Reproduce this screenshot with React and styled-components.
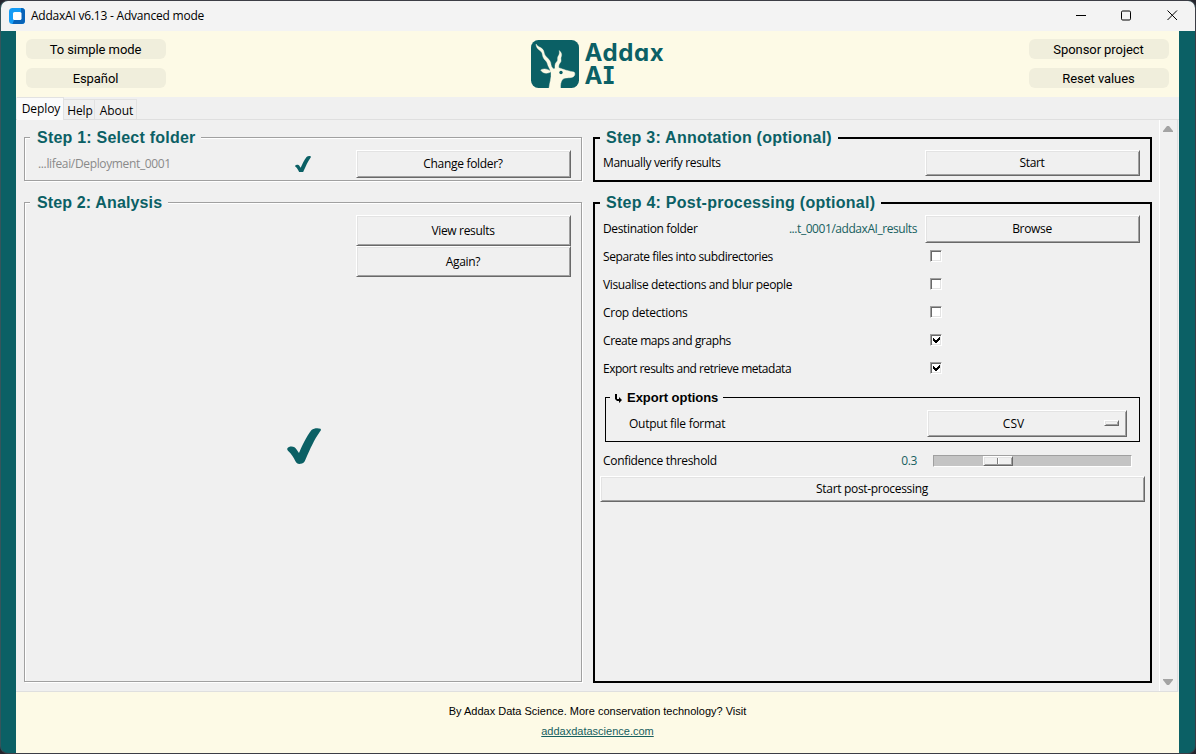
import React from "react";
import styled, { createGlobalStyle, css } from "styled-components";

const teal = "#0b6065";
const face = "#f0f0f0";
const cream = "#fdfae6";

const GlobalStyle = createGlobalStyle`
  *, *::before, *::after { box-sizing: border-box; }
  html, body { margin: 0; padding: 0; background: #25252d; overflow: hidden; }
  button { font: inherit; color: inherit; margin: 0; padding: 0; }
`;

const Window = styled.div`
  width: 1196px;
  height: 754px;
  display: flex;
  flex-direction: column;
  border: 1px solid #3c3d45;
  border-left-color: #35555c;
  border-radius: 8px;
  overflow: hidden;
  background: ${teal};
  color: #000;
  font: 12px/16px "Open Sans", "Noto Sans", sans-serif;
  letter-spacing: -0.35px;
`;

const TitleBar = styled.header`
  height: 30px;
  flex: none;
  display: flex;
  align-items: center;
  padding: 0 17px 0 8px;
  background: #f3f3f3;
`;

const WindowTitle = styled.span`
  flex: 1;
  margin-left: 5px;
  letter-spacing: -0.22px;
`;

const Controls = styled.div`
  display: flex;
  gap: 34px;
  svg { display: block; }
`;

const Client = styled.div`
  flex: 1;
  min-height: 0;
  margin: 0 16px 0 15px;
  display: flex;
  flex-direction: column;
  background: ${face};
`;

const Banner = styled.div`
  height: 66px;
  flex: none;
  display: flex;
  justify-content: space-between;
  padding: 8px 10px 0;
  background: ${cream};
`;

const PillColumn = styled.div`
  display: flex;
  flex-direction: column;
  gap: 9px;
`;

const Pill = styled.button`
  width: 140px;
  height: 20px;
  padding: 1px 1px 0 0;
  border: 0;
  border-radius: 6px;
  background: #f0eedc;
  font: 13px/20px Roboto, sans-serif;
  letter-spacing: -0.07px;
`;

const Brand = styled.div`
  display: flex;
  gap: 6px;
  padding-top: 1px;
  margin-left: 0;
`;

const BrandName = styled.div`
  width: 80px;
  display: flex;
  flex-direction: column;
  color: ${teal};
  font: 700 24px/23px Inter, sans-serif;
  font-feature-settings: "cv11" 1, "ss03" 1, "cv08" 1;
  letter-spacing: 0.6px;
  padding-top: 1px;
  white-space: nowrap;
`;

const Tabs = styled.nav`
  height: 23px;
  flex: none;
  display: flex;
  align-items: flex-end;
  padding-left: 1px;
  border-bottom: 1px solid #dfdfdf;
`;

const Tab = styled.div`
  width: ${(p) => p.$w}px;
  height: 20px;
  padding-left: 2px;
  border: 1px solid #e2e2e2;
  border-width: 1px 1px 0 0;
  text-align: center;
  line-height: 22px;
  letter-spacing: -0.1px;
  ${(p) =>
    p.$active &&
    css`
      height: 23px;
      margin-bottom: -1px;
      line-height: 22px;
      background: #fbfbfb;
    `}
`;

const Page = styled.div`
  flex: 1;
  min-height: 0;
  display: flex;
  margin-right: 1px;
  border-right: 1px solid #e0e0e0;
  border-bottom: 1px solid #dfdfdf;
`;

const Columns = styled.main`
  flex: 1;
  display: grid;
  grid-template-columns: 558px 559px;
  column-gap: 11px;
  padding: 17px 0 0 8px;
`;

const Column = styled.div`
  display: flex;
  flex-direction: column;
  gap: ${(p) => p.$gap}px;
`;

const Panel = styled.section`
  height: ${(p) => p.$h}px;
  display: flex;
  flex-direction: column;
  ${(p) =>
    p.$strong
      ? css`
          border: 2px solid #000;
        `
      : css`
          border: 1px solid #a0a0a0;
          box-shadow: inset 1px 1px 0 #fff, 1px 1px 0 #fff;
        `}
`;

const PanelTitle = styled.h2`
  align-self: flex-start;
  height: 20px;
  margin: ${(p) => (p.$strong ? "-11px 0 2px 5px" : "-10px 0 2px 5px")};
  padding: 0 6px 0 ${(p) => (p.$strong ? 6 : 7)}px;
  background: ${face};
  color: ${teal};
  font: 700 16px/20px "Liberation Sans", Arial, sans-serif;
  letter-spacing: ${(p) => p.$track || 0}px;
  white-space: nowrap;
`;

const Row = styled.div`
  height: ${(p) => p.$h || 28}px;
  flex: none;
  display: flex;
  align-items: center;
  padding: ${(p) => p.$top || 0}px 10px 0 ${(p) => p.$indent || 8}px;
`;

const Label = styled.span`
  flex: 1;
  letter-spacing: ${(p) => p.$track || -0.35}px;
  color: ${(p) => p.$color || "inherit"};
`;

const Value = styled.span`
  margin-right: ${(p) => p.$gap}px;
  letter-spacing: ${(p) => p.$track || -0.4}px;
  color: #17605f;
`;

const raised = css`
  border: 1px solid;
  border-color: #fff #696969 #696969 #fff;
  box-shadow: inset 1px 1px 0 #e3e3e3, inset -1px -1px 0 #a0a0a0;
`;

const Button = styled.button`
  ${raised}
  width: ${(p) => p.$w || 215}px;
  height: ${(p) => p.$h || 28}px;
  padding-right: 1px;
  flex: none;
  background: ${face};
  line-height: 16px;
  letter-spacing: -0.32px;
`;

const ButtonStack = styled.div`
  display: flex;
  flex-direction: column;
  align-items: flex-end;
  padding-right: ${(p) => p.$inset || 10}px;
`;

const BigCheck = styled.div`
  padding: 151px 0 0 262px;
  svg { display: block; }
`;

const SmallCheck = styled.span`
  margin-right: 45px;
  svg { display: block; }
`;

const Box = styled.span`
  width: 12px;
  height: 12px;
  margin-right: 198px;
  margin-top: -2px;
  background: #fff;
  border: 1px solid;
  border-color: #a0a0a0 #fff #fff #a0a0a0;
  box-shadow: inset 1px 1px 0 #696969, inset -1px -1px 0 #e3e3e3;
  svg { display: block; margin: 1px 0 0 2px; }
`;

const OptionGroup = styled.section`
  height: 45px;
  flex: none;
  margin: 14px 10px 0 10px;
  border: 1px solid #000;
  display: flex;
  flex-direction: column;
`;

const OptionTitle = styled.h3`
  align-self: flex-start;
  display: flex;
  align-items: center;
  gap: 5px;
  height: 16px;
  margin: -8px 0 4px 4px;
  padding: 0 5px;
  background: ${face};
  font: 700 13px/16px "Liberation Sans", Arial, sans-serif;
  letter-spacing: -0.03px;
`;

const Select = styled.button`
  ${raised}
  width: 200px;
  height: 27px;
  margin-right: 2px;
  background: ${face};
  display: flex;
  align-items: center;
  padding: 0 7px 0 0;
`;

const SelectText = styled.span`
  flex: 1;
  margin-right: 5px;
  text-align: center;
`;

const SelectMark = styled.span`
  ${raised}
  width: 15px;
  height: 6px;
  margin-top: -1px;
`;

const Track = styled.div`
  width: 199px;
  height: 12px;
  margin-right: 8px;
  padding-left: 49px;
  background: #c4c4c4;
  border: 1px solid;
  border-color: #a0a0a0 #fff #fff #a0a0a0;
`;

const Thumb = styled.div`
  ${raised}
  width: 30px;
  height: 10px;
  background: linear-gradient(90deg, transparent 13px, #808080 13px, #808080 14px, #fff 14px, #fff 15px, transparent 15px), ${face};
`;

const ScrollBar = styled.aside`
  width: 18px;
  flex: none;
  display: flex;
  flex-direction: column;
  justify-content: space-between;
  align-items: flex-start;
  padding: 6px 0 5px 3px;
  border-left: 1px solid #fff;
  svg { display: block; }
`;

const Footer = styled.footer`
  height: 61px;
  flex: none;
  display: flex;
  flex-direction: column;
  align-items: center;
  gap: 4px;
  padding-top: 11px;
  background: ${cream};
  font: 11px/16px "Liberation Sans", Arial, sans-serif;
  letter-spacing: 0;
`;

const Link = styled.a`
  color: #17605f;
  text-decoration: underline;
`;

const AppIcon = () => (
  <svg width="17" height="16" viewBox="0 0 17 16">
    <rect width="16" height="16" rx="3.5" fill="#159cf5" />
    <path d="M12 0h.5A3.5 3.5 0 0 1 16 3.5v9a3.5 3.5 0 0 1-3.5 3.5h-9L5 12h7z" fill="#0863b8" />
    <rect x="4" y="4" width="8.5" height="8" rx="1.6" fill="#fff" />
  </svg>
);

const AddaxMark = () => (
  <svg width="48" height="48" viewBox="0 0 48 48">
    <rect width="48" height="48" rx="7.5" fill={teal} />
    <g fill={cream} stroke={cream} strokeWidth="0.4">
      <path d="M19.500 30L27 27.500C31 28.500 34 30.500 43 32C44.500 33 44 36 42 37C38 38.500 34 37 31.500 39.500C29.500 42 29.500 45 29.500 48H18C18.500 43 20.500 38 20 33z" />
      <path d="M9.700 30C13 28 17 29 20 31.500C17 34 12 34 9.700 30z" />
      <path d="M5 4C7 7.500 11 7 12.500 10.500C13.500 13 13 14.500 15.500 17C18 19.500 20 21.500 20 24.500C20.200 27 22 28 23 29.500L19.500 31C18.500 28 17 26.500 16.500 24C16 21 13 20 12 17C11 14 11.500 12.500 9.500 11C6.500 9 5 7 5 4z" />
      <path d="M28.300 10.500C31 13 31 15 30 17.500C29.500 19.500 31 21 29 23C27.500 24.500 28 26 27.500 28L24 29C24 26 23.500 24 25.500 22C27.500 20.500 26 18.500 27 16.500C28.500 14.500 28.500 13 28.300 10.500z" />
    </g>
    <circle cx="30" cy="32.500" r="1.700" fill={teal} />
  </svg>
);

const Tick = ({ size }) => (
  <svg width={size} height={size * 1.06} viewBox="0 0 34 36">
    <path
      d="M.3 20.500C1.500 18.500 5 18 7.500 19.200C9.500 20.500 10.500 23 12 25C15 18 19.500 8.500 24.500 2C27 0 31 -.2 33.500 .8C34.300 1.500 33.800 2.500 33 3.500C27 12 23.500 20 18.500 31.500C17.500 34 16.500 35.500 14 35.800C11 36.200 9.500 35.500 8.300 33C6.500 29 4.500 26 1.200 23C.3 22 0 21.300 .3 20.500z"
      fill={teal}
    />
  </svg>
);

const CheckRow = ({ label, checked, track }) => (
  <Row>
    <Label $track={track}>{label}</Label>
    <Box role="checkbox" aria-checked={checked}>
      {checked && (
        <svg width="7" height="7" viewBox="0 0 7 7" shapeRendering="crispEdges">
          <path d="M0 2v3l2 2h1l4-4V0L3 4H2z" fill="#000" />
        </svg>
      )}
    </Box>
  </Row>
);

export default function App() {
  return (
    <>
      <GlobalStyle />
      <Window>
        <TitleBar>
          <AppIcon />
          <WindowTitle>AddaxAI v6.13 - Advanced mode</WindowTitle>
          <Controls>
            <svg width="12" height="12"><path d="M2 5.500h10" stroke="#000" /></svg>
            <svg width="12" height="12"><rect x="1.500" y="1" width="9" height="9" rx="1.200" fill="none" stroke="#000" /></svg>
            <svg width="12" height="12"><path d="M1.500 .5l9.500 9.500M11 .5L1.500 10" stroke="#000" /></svg>
          </Controls>
        </TitleBar>

        <Client>
          <Banner>
            <PillColumn>
              <Pill>To simple mode</Pill>
              <Pill>Español</Pill>
            </PillColumn>
            <Brand>
              <AddaxMark />
              <BrandName>
                <span>Addax</span>
                <span>AI</span>
              </BrandName>
            </Brand>
            <PillColumn>
              <Pill>Sponsor project</Pill>
              <Pill>Reset values</Pill>
            </PillColumn>
          </Banner>

          <Tabs>
            <Tab $w={47} $active>Deploy</Tab>
            <Tab $w={31}>Help</Tab>
            <Tab $w={42}>About</Tab>
          </Tabs>

          <Page>
            <Columns>
              <Column $gap={21}>
                <Panel $h={44}>
                  <PanelTitle $track={0.22}>Step 1: Select folder</PanelTitle>
                  <Row $indent={13}>
                    <Label $color="#8a8a8a" $track={-0.35}>...lifeai/Deployment_0001</Label>
                    <SmallCheck><Tick size={16} /></SmallCheck>
                    <Button>Change folder?</Button>
                  </Row>
                </Panel>
                <Panel $h={480}>
                  <PanelTitle $track={0.14}>Step 2: Analysis</PanelTitle>
                  <ButtonStack>
                    <Button $h={31}>View results</Button>
                    <Button $h={31}>Again?</Button>
                  </ButtonStack>
                  <BigCheck><Tick size={34} /></BigCheck>
                </Panel>
              </Column>

              <Column $gap={20}>
                <Panel $h={45} $strong>
                  <PanelTitle $strong $track={0.24}>Step 3: Annotation (optional)</PanelTitle>
                  <Row $h={26}>
                    <Label>Manually verify results</Label>
                    <Button $h={26}>Start</Button>
                  </Row>
                </Panel>
                <Panel $h={481} $strong>
                  <PanelTitle $strong $track={0.26}>Step 4: Post-processing (optional)</PanelTitle>
                  <Row>
                    <Label>Destination folder</Label>
                    <Value $gap={8} $track={-0.44}>...t_0001/addaxAI_results</Value>
                    <Button>Browse</Button>
                  </Row>
                  <CheckRow label="Separate files into subdirectories" track={-0.41} />
                  <CheckRow label="Visualise detections and blur people" />
                  <CheckRow label="Crop detections" track={-0.27} />
                  <CheckRow label="Create maps and graphs" track={-0.41} checked />
                  <CheckRow label="Export results and retrieve metadata" track={-0.48} checked />
                  <OptionGroup>
                    <OptionTitle>
                      <svg width="7" height="9" viewBox="0 0 7 9"><path d="M0 0h2v5h2V3l3 3-3 3V7H2L0 5z" fill="#000" /></svg>
                      Export options
                    </OptionTitle>
                    <Row $h={27} $indent={23}>
                      <Label $track={-0.28}>Output file format</Label>
                      <Select>
                        <SelectText>CSV</SelectText>
                        <SelectMark />
                      </Select>
                    </Row>
                  </OptionGroup>
                  <Row $h={34} $top={4}>
                    <Label $track={-0.32}>Confidence threshold</Label>
                    <Value $gap={16}>0.3</Value>
                    <Track><Thumb /></Track>
                  </Row>
                  <ButtonStack $inset={5}>
                    <Button $w={545} $h={26}>Start post-processing</Button>
                  </ButtonStack>
                </Panel>
              </Column>
            </Columns>
            <ScrollBar>
              <svg width="10" height="7"><path d="M4 0h2l4 5v1H0V5z" fill="#a3a3a3" /></svg>
              <svg width="10" height="7"><path d="M4 6h2l4-5V0H0v1z" fill="#a3a3a3" /></svg>
            </ScrollBar>
          </Page>

          <Footer>
            <span>By Addax Data Science. More conservation technology? Visit</span>
            <Link>addaxdatascience.com</Link>
          </Footer>
        </Client>
      </Window>
    </>
  );
}
